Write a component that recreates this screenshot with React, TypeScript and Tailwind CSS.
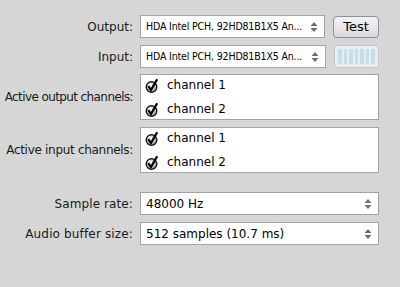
import React from "react";

const font = { fontFamily: '"DejaVu Sans", Verdana, sans-serif' };

function Arrows() {
  return (
    <svg width="8" height="12" viewBox="0 0 8 12" className="shrink-0">
      <path d="M4 1 L7.5 5 L0.5 5 Z" fill="#6e6e6e" />
      <path d="M4 11 L7.5 7 L0.5 7 Z" fill="#6e6e6e" />
    </svg>
  );
}

function Check() {
  return (
    <svg width="14" height="15" viewBox="0 0 14 15" className="shrink-0">
      <defs>
        <radialGradient id="cg" cx="0.4" cy="0.35" r="0.7">
          <stop offset="0" stopColor="#ffffff" />
          <stop offset="1" stopColor="#9a9a9a" />
        </radialGradient>
      </defs>
      <circle cx="6.5" cy="9" r="5.3" fill="url(#cg)" stroke="#1a1a1a" strokeWidth="1.4" />
      <path d="M3.2 8.2 L6 12 L12.2 1.2" fill="none" stroke="#000" strokeWidth="2.2" strokeLinejoin="round" />
    </svg>
  );
}

function Select({ text, small }: { text: string; small?: boolean }) {
  return (
    <div className="flex h-[23px] flex-1 items-center justify-between border border-[#a3a3a3] bg-white pl-[5px] pr-[6px]">
      <span
        className={
          small
            ? "whitespace-nowrap text-[10.5px] tracking-[-0.15px] text-black"
            : "whitespace-nowrap text-[12px] text-black"
        }
        style={small ? { fontFamily: '"DejaVu Sans Condensed", "DejaVu Sans", sans-serif', fontStretch: "condensed" } : undefined}
      >
        {text}
      </span>
      <Arrows />
    </div>
  );
}

function Label({ children, className }: { children: React.ReactNode; className: string }) {
  return (
    <div className={"w-[133px] shrink-0 whitespace-nowrap text-right text-[12px] text-[#1a1a1a] " + className}>
      {children}
    </div>
  );
}

function Channels() {
  return (
    <div className="flex h-[46px] flex-1 flex-col justify-center gap-[6px] border border-[#a3a3a3] bg-white pl-[4px]">
      {["channel 1", "channel 2"].map((c) => (
        <div key={c} className="flex items-center gap-[8px]">
          <Check />
          <span className="text-[12px] text-black">{c}</span>
        </div>
      ))}
    </div>
  );
}

export default function App() {
  return (
    <div className="h-[287px] w-[400px] bg-[#d6d6d6]" style={font}>
      <div className="flex w-[379px] flex-col pt-[15px]">
        <div className="flex items-center gap-[7px]">
          <Label className="tracking-[0px]">Output:</Label>
          <div className="flex flex-1 items-center gap-[8px]">
            <Select text="HDA Intel PCH, 92HD81B1X5 An..." small />
            <div className="flex h-[22px] w-[46px] items-center justify-center rounded-[4px] border border-[#8e8e9c] bg-gradient-to-b from-[#f4f4f7] to-[#d9d9e0] text-[13px] text-black">
              Test
            </div>
          </div>
        </div>
        <div className="mt-[7px] flex items-center gap-[7px]">
          <Label className="tracking-[0px]">Input:</Label>
          <div className="flex flex-1 items-center gap-[8px]">
            <Select text="HDA Intel PCH, 92HD81B1X5 An..." small />
            <div className="flex h-[23px] w-[45px] gap-[2px] rounded-[3px] border border-[#c2c8cc] bg-[#e8eef0] px-[3px] py-[3px]">
              {[0, 1, 2, 3, 4, 5, 6].map((i) => (
                <div key={i} className="flex-1 rounded-[1px] bg-[#c3dfe9]" />
              ))}
            </div>
          </div>
        </div>
        <div className="mt-[6px] flex items-center gap-[7px]">
          <Label className="tracking-[-0.6px]">Active output channels:</Label>
          <Channels />
        </div>
        <div className="mt-[7px] flex items-center gap-[7px]">
          <Label className="tracking-[-0.3px]">Active input channels:</Label>
          <Channels />
        </div>
        <div className="mt-[19px] flex items-center gap-[7px]">
          <Label className="tracking-[0.1px]">Sample rate:</Label>
          <Select text="48000 Hz" />
        </div>
        <div className="mt-[7px] flex items-center gap-[7px]">
          <Label className="tracking-[0.15px]">Audio buffer size:</Label>
          <Select text="512 samples (10.7 ms)" />
        </div>
      </div>
    </div>
  );
}
